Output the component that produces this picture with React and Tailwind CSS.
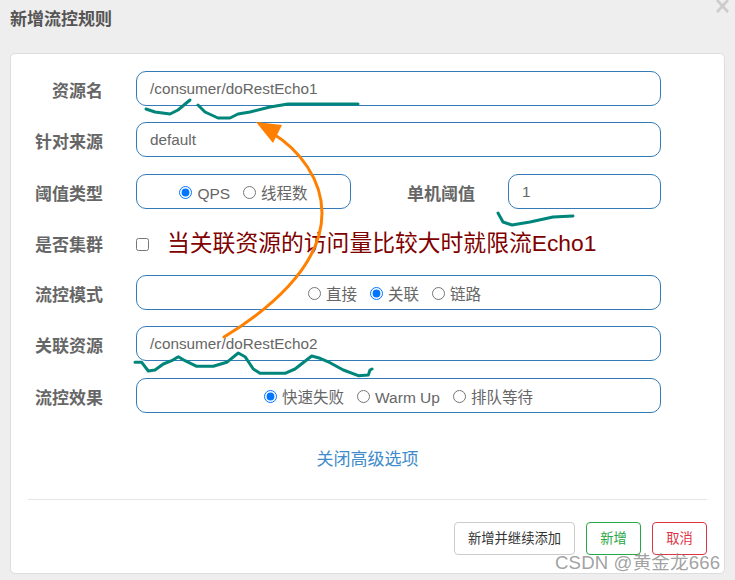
function Row({ label, children, className = 'mt-[16px]' }) {
  return (
    <div className={`flex items-center h-[35px] ${className}`}>
      <label className="w-[92px] pt-[5px] text-right text-[17px] leading-none font-bold text-[#666] whitespace-nowrap">{label}</label>
      <div className="ml-[33px] flex-1 flex items-center h-full">{children}</div>
    </div>
  )
}

function TextBox({ value, className = '' }) {
  return (
    <div className={`h-full flex items-center px-[13px] pt-[1px] rounded-[10px] border border-[#337ab7] text-[15.3px] text-[#666] bg-white ${className}`}>
      {value}
    </div>
  )
}

function Radio({ label, checked, name }) {
  return (
    <label className="flex items-center gap-[5px]">
      <input type="radio" name={name} defaultChecked={checked} className="m-0 w-[13px] h-[13px]" />
      <span className="pt-[2px]">{label}</span>
    </label>
  )
}

function RadioBox({ name, options, checked, className = '' }) {
  return (
    <div className={`h-full flex items-center justify-center gap-[13px] pt-[2px] rounded-[10px] border border-[#337ab7] text-[15.5px] text-[#666] bg-white ${className}`}>
      {options.map(o => <Radio key={o} name={name} label={o} checked={o === checked} />)}
    </div>
  )
}

function Scribbles() {
  return (
    <svg className="absolute inset-0 pointer-events-none" width="735" height="580" viewBox="0 0 735 580" fill="none">
      <g stroke="#00857a" strokeWidth="3" strokeLinecap="round" strokeLinejoin="round">
        <polyline points="146,109 155,112 170,114 178,110 190,100" />
        <polyline points="198,105 205,112 218,118 230,118 238,114 250,112 270,107 288,104 358,104" />
        <polyline points="498,213 503,222 512,225 530,222 553,217 573,216" />
        <polyline points="135,362.3 141.7,362.3 148.3,371 155,370 163.3,364 171.7,360.7 178.3,356.7 185,360.7 196.7,366.3 213.3,366.3 226.7,362.3 238.3,353 245,356.7 253.3,369 260,373.3 285,373.3 295,369 311.7,356 320,358.3 330,362.7 343.3,370 358.3,375.7 368.3,375 370,370 372,369" />
      </g>
      <path d="M224 337C265 312 322 268 322 213C322 180 300 150 272 133" stroke="#ff8000" strokeWidth="3" strokeLinecap="round" />
      <polygon points="256,122 282,125 273,143" fill="#ff8000" />
    </svg>
  )
}

export default function App() {
  return (
    <div className="relative w-[735px] h-[580px] overflow-hidden bg-[#eee] font-['Liberation_Sans','Noto_Sans_CJK_SC',sans-serif]">
      <div className="h-[53px] pl-[10px] pt-[9px] text-[17px] leading-[22px] font-bold text-[#555]">新增流控规则</div>
      <svg className="absolute left-[716px] top-0" width="13" height="13" viewBox="0 0 13 13" stroke="#ccc" strokeWidth="2.6">
        <line x1="1" y1="0" x2="12" y2="12" />
        <line x1="12" y1="0" x2="1" y2="12" />
      </svg>

      <div className="mx-[10px] h-[521px] rounded-[5px] border border-[#ddd] bg-white pt-[17px] pr-[63px]">
        <Row label="资源名" className=""><TextBox value="/consumer/doRestEcho1" className="w-full" /></Row>
        <Row label="针对来源"><TextBox value="default" className="w-full" /></Row>
        <Row label="阈值类型" className="mt-[17px]">
          <RadioBox name="grade" options={['QPS', '线程数']} checked="QPS" className="w-[215px]" />
          <label className="ml-[56px] pt-[5px] text-[17px] leading-none font-bold text-[#666] whitespace-nowrap">单机阈值</label>
          <TextBox value="1" className="ml-[33px] w-[153px]" />
        </Row>
        <Row label="是否集群">
          <input type="checkbox" className="m-0 mt-[3px] w-[13px] h-[13px]" />
        </Row>
        <Row label="流控模式" className="mt-[15px]">
          <RadioBox name="mode" options={['直接', '关联', '链路']} checked="关联" className="w-full pr-[8px]" />
        </Row>
        <Row label="关联资源"><TextBox value="/consumer/doRestEcho2" className="w-full" /></Row>
        <Row label="流控效果" className="mt-[17px]">
          <RadioBox name="effect" options={['快速失败', 'Warm Up', '排队等待']} checked="快速失败" className="w-full" />
        </Row>

        <div className="mt-[33px] mr-[-63px] text-center text-[17px] leading-[28px] text-[#428bca]">关闭高级选项</div>

        <div className="mt-[25px] ml-[17px] mr-[-46px] border-t border-[#e5e5e5] flex justify-end gap-[11px] pt-[22px]">
          <button className="h-[33px] w-[121px] rounded-[4px] border border-[#ccc] bg-white text-[13.3px] text-[#333]">新增并继续添加</button>
          <button className="h-[33px] w-[55px] rounded-[4px] border border-[#28a745] bg-white text-[13.3px] text-[#28a745]">新增</button>
          <button className="h-[33px] w-[55px] rounded-[4px] border border-[#dc3545] bg-white text-[13.3px] text-[#dc3545]">取消</button>
        </div>
      </div>

      <div className="absolute left-[167px] top-[227px] text-[22.8px] leading-[32px] text-[#800000] whitespace-nowrap">当关联资源的访问量比较大时就限流Echo1</div>
      <Scribbles />
      <div className="absolute left-[555px] top-[550px] text-[18.6px] leading-[26px] tracking-[0.15px] text-[#8a8a8a]/80 whitespace-nowrap">CSDN @黄金龙666</div>
    </div>
  )
}
